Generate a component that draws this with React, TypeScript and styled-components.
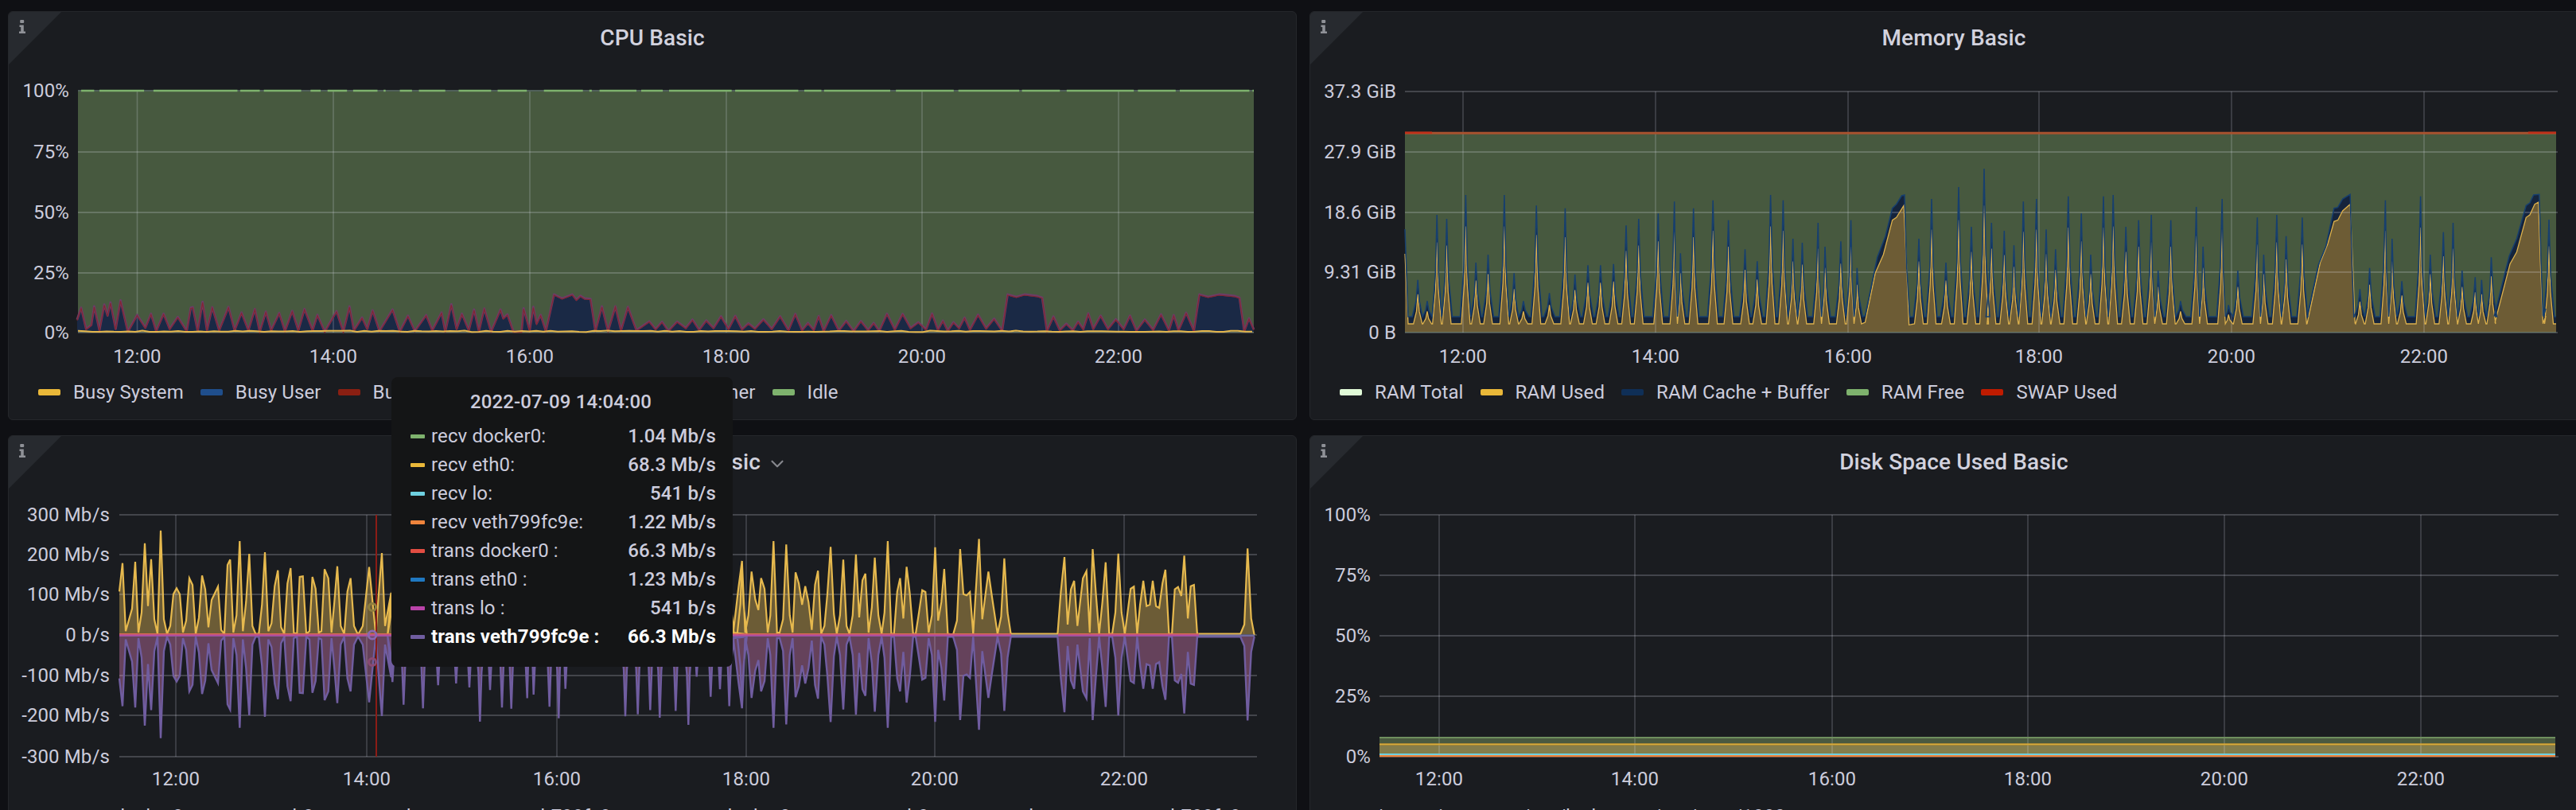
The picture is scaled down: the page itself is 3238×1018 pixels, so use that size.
import styled, { createGlobalStyle } from 'styled-components';
import { ChevronDown } from 'lucide-react';

type Pt = [number, number];

const GREEN = '#7EB26D';
const YELLOW = '#EAB839';
const GRID = 'rgba(235,235,250,0.2)';

const GlobalStyle = createGlobalStyle`
    html, body {
        margin: 0;
        background: #0f1014;
        overflow: hidden;
    }
    body {
        font-family: Roboto, "Liberation Sans", sans-serif;
        color: rgb(204, 204, 220);
        letter-spacing: 0.12px;
    }
`;

const Page = styled.div`
    position: relative;
    width: 3238px;
    height: 1018px;
    overflow: hidden;
    box-sizing: border-box;
    padding: 14px 0 0 10px;
    display: grid;
    grid-template-columns: 1620px 1620px;
    grid-auto-rows: 514px;
    gap: 19px 16px;
`;

const Panel = styled.section`
    position: relative;
    box-sizing: border-box;
    height: 514px;
    background: #1a1c20;
    border: 1px solid #25272b;
    border-radius: 6px;
    overflow: hidden;
    display: flex;
    flex-direction: column;
`;

const InfoCorner = styled.div`
    position: absolute;
    left: 0;
    top: 0;
    width: 66px;
    height: 66px;
    background: #272a2f;
    clip-path: polygon(0 0, 100% 0, 0 100%);
`;

const InfoGlyph = styled.svg`
    position: absolute;
    left: 13px;
    top: 10px;
    width: 8px;
    height: 17px;
    fill: #8f9197;
`;

const Header = styled.header`
    height: 65px;
    flex: none;
    display: flex;
    align-items: center;
    justify-content: center;
`;

const Title = styled.h2`
    position: relative;
    margin: 0;
    font-size: 28px;
    font-weight: 500;
    line-height: 36px;
    color: #d2d2de;

    svg {
        position: absolute;
        left: 100%;
        top: 7px;
        margin-left: 8px;
        color: #85868c;
    }
`;

const ChartSvg = styled.svg`
    display: block;
    flex: none;
    width: 1618px;
    height: 390px;
`;

const AxisLabel = styled.text`
    font-family: Roboto, "Liberation Sans", sans-serif;
    font-size: 24px;
    fill: rgb(204, 204, 220);
`;

const Legend = styled.ul`
    list-style: none;
    margin: 0;
    padding: 0 0 0 37px;
    height: 46px;
    flex: none;
    display: flex;
    align-items: center;
    gap: 21px;
    font-size: 24px;
`;

const LegendItem = styled.li`
    display: flex;
    align-items: center;
    gap: 16px;
    white-space: nowrap;
`;

const Swatch = styled.i<{ $color: string }>`
    display: block;
    width: 28px;
    height: 8px;
    border-radius: 2px;
    background: ${p => p.$color};
`;

const Tooltip = styled.div`
    position: absolute;
    left: 492px;
    top: 474px;
    width: 429px;
    height: 364px;
    box-sizing: border-box;
    padding: 13px 21px 0 24px;
    background: #141516;
    border-radius: 8px;
`;

const TooltipTitle = styled.div`
    height: 36px;
    line-height: 36px;
    margin-bottom: 7px;
    text-align: center;
    padding-right: 6px;
    font-size: 24px;
    font-weight: 500;
`;

const TooltipRow = styled.div<{ $active?: boolean }>`
    height: 36px;
    display: flex;
    align-items: center;
    font-size: 24px;
    color: ${p => (p.$active ? '#ffffff' : 'rgb(204, 204, 220)')};
    font-weight: ${p => (p.$active ? 700 : 400)};
`;

const TooltipSwatch = styled.i<{ $color: string }>`
    width: 18px;
    height: 5px;
    margin-right: 8px;
    border-radius: 1px;
    flex: none;
    background: ${p => p.$color};
`;

const TooltipValue = styled.span<{ $active?: boolean }>`
    margin-left: auto;
    font-weight: ${p => (p.$active ? 700 : 500)};
`;

// turns a list of traced points into svg strings
const toLine = (pts: Pt[]) => pts.map(([x, y]) => `${x.toFixed(1)},${y.toFixed(1)}`).join(' ');
const closed = (pts: Pt[], base: number) => {
    const first = pts[0][0];
    const last = pts[pts.length - 1][0];
    return `${first},${base} ${toLine(pts)} ${last},${base}`;
};

function seeded(seed: number) {
    let s = seed;
    return () => {
        s = (s * 16807) % 2147483647;
        return (s % 10000) / 10000;
    };
}

// peaks are concave, thin at the tip and wider at the foot
function spikes(peaks: Pt[], base: number, hw = 6): Pt[] {
    const out: Pt[] = [];
    peaks.forEach(([x, y], i) => {
        const prev = peaks[i - 1];
        const next = peaks[i + 1];
        const l = prev ? Math.max(x - hw, (prev[0] + x) / 2) : x - hw;
        const r = next ? Math.min(x + hw, (x + next[0]) / 2) : x + hw;
        const mid = base + (y - base) * 0.42;
        out.push([l, base], [x - (x - l) * 0.32, mid], [x, y], [x + (r - x) * 0.32, mid], [r, base]);
    });
    return out;
}

/* ---------- CPU ---------- */

const cpuTrace: Pt[] = [
    [190, 1205], [200, 1160], [212, 1240], [225, 1225], [232, 1155], [245, 1245], [257, 1148], [265, 1190], [272, 1140], [285, 1240], [297, 1132], [315, 1250],
    [338, 1187], [358, 1235], [372, 1183], [385, 1248], [403, 1183], [418, 1240], [438, 1195], [460, 1248], [470, 1160], [475, 1158], [487, 1248], [499, 1138],
    [510, 1245], [523, 1158], [540, 1245], [563, 1157], [578, 1245], [595, 1178], [612, 1245], [628, 1165], [640, 1250], [655, 1175], [668, 1245], [688, 1180],
    [702, 1248], [720, 1172], [735, 1245], [750, 1165], [770, 1245], [782, 1187], [800, 1250], [829, 1173], [846, 1250], [861, 1155], [872, 1245], [892, 1197],
    [905, 1240], [918, 1170], [935, 1248], [967, 1167], [985, 1250], [1005, 1190], [1022, 1248], [1050, 1188], [1065, 1245], [1088, 1178], [1097, 1250],
    [1112, 1147], [1125, 1240], [1138, 1183], [1155, 1245], [1168, 1167], [1180, 1248], [1193, 1163], [1210, 1250], [1233, 1167], [1240, 1200], [1250, 1185],
    [1265, 1250], [1285, 1250], [1290, 1162], [1305, 1245], [1314, 1157], [1322, 1220], [1332, 1187], [1345, 1248], [1365, 1110], [1385, 1125], [1410, 1110],
    [1420, 1130], [1430, 1115], [1440, 1125], [1455, 1127], [1467, 1248], [1483, 1155], [1498, 1248], [1516, 1155], [1530, 1245], [1547, 1157], [1568, 1245],
];

function buildCpu(): Pt[] {
    const pts: Pt[] = cpuTrace.map(([x, y]) => [x / 1.96, y / 3]);
    const r = seeded(77);
    const plateau = (a: number, b: number) => {
        pts.push([a, 416], [a + 7, 370], [a + 18, 373], [(a + b) / 2, 370], [b - 12, 372], [b - 6, 374], [b, 416]);
    };
    let x = 808;
    const run = (end: number) => {
        while (x < end) {
            const w = 6 + r() * 5;
            pts.push([x + w, 393 + r() * 14], [x + 2 * w, 412 + r() * 4]);
            x += 2 * w;
        }
    };
    run(1252);
    plateau(x, 1316);
    x = 1316;
    run(1500);
    plateau(x, 1564);
    x = 1564;
    pts.push([1570, 400], [1576, 414]);
    return pts;
}

// the idle line sits on 100% but drops out for a few pixels now and then
const idleTrace: Pt[] = ([
    [200, 232], [245, 355], [378, 585], [592, 640], [650, 742], [765, 790], [807, 855], [870, 930], [945, 950], [985, 1015], [1032, 1097], [1130, 1210], [1226, 1298], [1340, 1436], [1452, 1458], [1477, 1568],
] as Pt[]).map(([a, b]) => [a / 1.96, b / 1.96]);

function idleSegments(): Pt[] {
    const segs = [...idleTrace];
    const r = seeded(31);
    let x = 806;
    while (x < 1576) {
        const len = 20 + r() * 70;
        segs.push([x, Math.min(1576, x + len)]);
        x += len + 3 + r() * 6;
    }
    return segs;
}

function CpuChart() {
    const top = buildCpu();
    const r = seeded(9);
    const system: Pt[] = [];
    for (let x = 98; x <= 1576; x += 9) system.push([x, 415.6 + r() * 1.6]);
    return (
        <ChartSvg viewBox="11 80 1618 390">
            <rect x={98} y={115} width={1478} height={303} fill="#47593f" />
            <polygon points={closed(top, 417)} fill="#1a2945" />
            <Grid x0={98} x1={1576} top={114} ys={[191, 267, 343, 418]} xs={[172.5, 419, 666, 913, 1159, 1406]} />
            <polyline points={toLine(top)} fill="none" stroke="#6c3d66" strokeWidth={2.8} strokeLinejoin="round" />
            <polyline points={toLine(top.map(([x, y]) => [x, y + 1] as Pt))} fill="none" stroke="#84252f" strokeWidth={1.1} />
            <polyline points={toLine(system)} fill="none" stroke="#e4b64a" strokeWidth={2} />
            <line x1={98} x2={1576} y1={114} y2={114} stroke="#50605a" strokeWidth={2} />
            {idleSegments().map(([a, b]) => <line key={a} x1={a} x2={b} y1={114} y2={114} stroke={GREEN} strokeWidth={2.5} />)}
            <YLabels right={87} rows={[[114, '100%'], [191, '75%'], [267, '50%'], [343, '25%'], [418, '0%']]} />
            <XLabels y={455.5} xs={[172.5, 419, 666, 913, 1159, 1406]} />
        </ChartSvg>
    );
}

/* ---------- Memory ---------- */

const z3 = ([x, y]: Pt): Pt => [1620 + x / 1.96, y / 3];
const z4 = ([x, y]: Pt): Pt => [2500 + x / 2.125, 100 + y / 3];

const memPeaksA: Pt[] = ([
    [318, 1055], [341, 1135], [365, 810], [389, 825], [436, 735], [461, 990], [491, 960], [531, 735], [555, 1030], [578, 1135], [610, 775], [642, 1105],
    [681, 785], [705, 1035], [737, 1000], [768, 1000], [800, 995], [831, 850], [862, 825], [910, 805], [950, 760], [965, 955], [997, 785], [1045, 755],
    [1083, 830], [1124, 940], [1154, 985], [1187, 735], [1218, 755], [1242, 900], [1265, 915], [1304, 840], [1321, 930], [1360, 910], [1385, 830], [1400, 1010],
] as Pt[]).map(z3);
const memPeaksGap: Pt[] = [[2412, 300], [2428, 250], [2446, 330], [2462, 235], [2478, 285], [2494, 212]];
const memPeaksB: Pt[] = ([
    [7, 540], [41, 570], [67, 625], [92, 460], [127, 450], [153, 565], [178, 640], [212, 440], [247, 505], [272, 660], [306, 440], [332, 435], [366, 555],
    [400, 530], [434, 510], [452, 720], [486, 530], [512, 835], [554, 480], [572, 630], [623, 450], [640, 850], [665, 720], [717, 520], [734, 660], [769, 510], [794, 590], [837, 520],
] as Pt[]).map(z4);
const memPeaksC: Pt[] = ([
    [991, 790], [1017, 710], [1059, 455], [1077, 600], [1103, 760], [1153, 440], [1179, 660], [1214, 575], [1240, 540], [1264, 720], [1299, 745], [1316, 755], [1342, 670],
] as Pt[]).map(z4);

const cacheRamp1: Pt[] = ([[1420, 1190], [1450, 970], [1470, 890], [1487, 785], [1497, 770], [1510, 738], [1517, 735], [1522, 1000], [1530, 1195]] as Pt[]).map(z3);
const usedRamp1: Pt[] = ([[1420, 1215], [1445, 1030], [1465, 960], [1487, 830], [1497, 820], [1515, 775], [1522, 1000], [1528, 1225]] as Pt[]).map(z3);
const cacheRamp2: Pt[] = ([[850, 895], [880, 700], [900, 630], [922, 485], [932, 482], [945, 450], [965, 433], [970, 700], [975, 895]] as Pt[]).map(z4);
const usedRamp2: Pt[] = ([[850, 920], [885, 690], [905, 620], [922, 535], [932, 530], [945, 495], [965, 470], [972, 700], [978, 918]] as Pt[]).map(z4);
const cacheRamp3: Pt[] = ([[1350, 890], [1390, 665], [1410, 600], [1435, 475], [1445, 465], [1455, 435], [1470, 433], [1475, 690], [1480, 890]] as Pt[]).map(z4);
const usedRamp3: Pt[] = ([[1352, 915], [1392, 695], [1410, 650], [1435, 520], [1445, 510], [1458, 470], [1468, 462], [1473, 690], [1480, 920]] as Pt[]).map(z4);

function memSeries(base: number, scale: number, hw: number, ramps: Pt[][]): Pt[] {
    const s = (peaks: Pt[]) => spikes(peaks.map(([x, y]) => [x, base - (398 - y) * scale] as Pt), base, hw);
    return [
        [1766, base - 110 * scale] as Pt,
        [1770, base],
        ...s(memPeaksA),
        ...ramps[0],
        ...s(memPeaksGap),
        ...s(memPeaksB),
        ...ramps[1],
        ...s(memPeaksC),
        ...ramps[2],
        [3200, base - 10],
        ...s([[3204, 276]]),
        [3213, base],
    ];
}

function MemoryChart() {
    const cache = memSeries(398, 1, 7, [cacheRamp1, cacheRamp2, cacheRamp3]);
    const used = memSeries(407, 0.8, 5.5, [usedRamp1, usedRamp2, usedRamp3]);
    return (
        <ChartSvg viewBox="1647 80 1618 390">
            <rect x={1766} y={168} width={1447} height={250} fill="#47593f" />
            <polygon points={closed(cache, 417)} fill="#15243c" />
            <polygon points={closed(used, 417)} fill="#6d5c35" />
            <Grid x0={1766} x1={3215} top={115} ys={[115, 191, 267, 342, 418]} xs={[1839, 2081, 2323, 2563, 2805, 3047]} />
            <polyline points={toLine(used)} fill="none" stroke="#dcb04c" strokeWidth={1.3} />
            <polyline points={toLine(cache)} fill="none" stroke="#173f6e" strokeWidth={1.5} />
            <line x1={1766} x2={3213} y1={167.2} y2={167.2} stroke="#a8522f" strokeWidth={3} />
            <line x1={1766} x2={1800} y1={166.8} y2={166.8} stroke="#c0301a" strokeWidth={2.4} />
            <line x1={3178} x2={3213} y1={166.8} y2={166.8} stroke="#c0301a" strokeWidth={2.4} />
            <YLabels right={1755} rows={[[115, '37.3 GiB'], [191, '27.9 GiB'], [267, '18.6 GiB'], [342, '9.31 GiB'], [418, '0 B']]} />
            <XLabels y={455.5} xs={[1839, 2081, 2323, 2563, 2805, 3047]} />
        </ChartSvg>
    );
}

/* ---------- Network ---------- */

const netLeft: Pt[] = ([
    [450, 640], [462, 533], [474, 790], [498, 705], [510, 528], [522, 795], [534, 720], [546, 458], [558, 695], [570, 518], [582, 745], [594, 800], [606, 410],
    [618, 745], [630, 800], [642, 770], [654, 650], [666, 628], [678, 650], [690, 795], [702, 750], [714, 590], [726, 615], [738, 800], [750, 740], [762, 580],
    [774, 632], [786, 775], [798, 672], [822, 622], [834, 785], [846, 800], [858, 540], [868, 520], [880, 795], [892, 730], [904, 450], [916, 790], [928, 680],
    [940, 498], [952, 770], [964, 800], [976, 800], [988, 690], [999, 492], [1012, 790], [1024, 760], [1036, 620], [1048, 560], [1060, 775], [1072, 800],
    [1084, 610], [1096, 552], [1108, 795], [1120, 800], [1130, 585], [1142, 583], [1155, 800], [1167, 790], [1178, 585], [1190, 630], [1202, 795], [1212, 790],
    [1224, 556], [1238, 590], [1250, 795], [1260, 690], [1272, 545], [1285, 770], [1298, 800], [1310, 640], [1322, 590], [1335, 770], [1350, 803], [1368, 770],
    [1392, 548], [1417, 800], [1428, 650], [1440, 495], [1452, 770], [1475, 645],
] as Pt[]).map(([x, y]) => [x / 3, 530 + y / 3]);

// only the downward half shows below the tooltip, so the upward half is mirrored from it
const netHidden: Pt[] = spikes(([
    [40, 80], [82, 165], [155, 178], [212, 92], [280, 85], [330, 100], [370, 228], [408, 110], [453, 175], [488, 180], [548, 140], [572, 127], [632, 172],
    [667, 215], [692, 105], [918, 208], [965, 200], [1012, 185], [1048, 213], [1108, 188], [1156, 240], [1187, 60], [1240, 135], [1275, 107], [1310, 170], [1358, 175],
] as Pt[]).map(([x, y]) => [480 + x / 3, 797 - (830 + y / 3 - 800) * 1.03]), 797, 6);

const netZoomEleven: Pt[] = ([
    [65, 465], [85, 295], [98, 195], [110, 465], [122, 400], [134, 235], [148, 340], [160, 380], [170, 260], [183, 300], [195, 465], [205, 400], [217, 120],
    [230, 465], [240, 465], [253, 415], [265, 133], [278, 400], [289, 465],
] as Pt[]).map(([x, y]) => [900 + x / 3, 640 + y / 3]);

const netRight: Pt[] = ([
    [0, 568], [10, 610], [20, 690], [30, 620], [40, 680], [50, 785], [60, 615], [69, 562], [79, 800], [89, 770], [98, 650], [108, 472], [118, 725], [127, 800],
    [137, 730], [147, 520], [157, 770], [166, 800], [176, 730], [186, 500], [196, 738], [206, 598], [215, 573], [225, 795], [235, 700], [244, 512], [255, 730],
    [265, 800], [274, 720], [284, 450], [295, 800], [303, 800], [313, 640], [322, 590], [332, 742], [342, 547], [352, 650], [362, 800], [370, 800], [380, 720],
    [390, 635], [400, 642], [410, 795], [420, 730], [430, 473], [439, 750], [449, 680], [458, 555], [469, 800], [485, 803], [497, 750], [507, 480], [517, 650],
    [527, 655], [537, 642], [547, 800], [565, 442], [575, 745], [594, 565], [605, 660], [622, 800], [633, 735], [643, 515], [653, 720], [663, 800], [807, 800],
    [817, 640], [828, 510], [838, 765], [848, 632], [858, 600], [868, 770], [885, 590], [896, 563], [906, 795], [915, 480], [925, 650], [935, 800], [945, 680],
    [955, 530], [966, 800], [975, 800], [985, 720], [994, 497], [1004, 720], [1014, 800], [1032, 630], [1042, 622], [1052, 800], [1061, 690], [1071, 600],
    [1081, 695], [1091, 690], [1100, 600], [1110, 695], [1120, 702], [1130, 610], [1139, 558], [1150, 800], [1159, 800], [1168, 632], [1178, 623], [1188, 657],
    [1197, 505], [1208, 742], [1217, 620], [1227, 615], [1237, 800], [1370, 800], [1382, 765], [1392, 478], [1403, 742], [1413, 805],
] as Pt[]).map(([x, y]) => [1000 + x / 2.45, 530 + y / 3]);

const netUp: Pt[] = [...netLeft, ...netHidden, ...netZoomEleven, ...netRight];
const netDown: Pt[] = netUp.map(([x, y]) => [x, 800 + (y < 797 ? (797 - y) * 0.98 : 0)]);

function NetworkChart() {
    return (
        <ChartSvg viewBox="11 613 1618 390">
            <polygon points={closed(netUp, 797)} fill="#6c5c36" />
            <polygon points={closed(netDown, 800)} fill="#65425b" />
            <Grid x0={150} x1={1580} top={647} ys={[647, 697, 747, 798, 849, 899, 951]} xs={[221, 461, 700, 938, 1175, 1413]} />
            <polyline points={toLine(netDown)} fill="none" stroke="#705DA0" strokeWidth={2.4} />
            <polyline points={toLine(netUp)} fill="none" stroke="#e6b94e" strokeWidth={2.2} />
            <line x1={150} x2={1577} y1={798.8} y2={798.8} stroke="#6f6a9c" strokeWidth={2.4} />
            <line x1={150} x2={1271} y1={796.8} y2={796.8} stroke="#df6a52" strokeWidth={1.8} />
            <line x1={150} x2={1271} y1={798.6} y2={798.6} stroke="#b8489f" strokeWidth={2} />
            <line x1={1330} x2={1507} y1={796.8} y2={796.8} stroke="#df6a52" strokeWidth={1.8} />
            <line x1={1330} x2={1507} y1={798.6} y2={798.6} stroke="#b8489f" strokeWidth={2} />
            <line x1={473} x2={473} y1={647} y2={951} stroke="#8b1c16" strokeWidth={2} />
            <HoverDot cx={468} cy={763} r={4.5} stroke="#8f7f3f" />
            <HoverDot cx={468} cy={798} r={5} stroke="#8a68b0" />
            <HoverDot cx={468} cy={832} r={4.5} stroke="#8a4a73" />
            <YLabels right={138} rows={[[647, '300 Mb/s'], [697, '200 Mb/s'], [747, '100 Mb/s'], [798, '0 b/s'], [849, '-100 Mb/s'], [899, '-200 Mb/s'], [951, '-300 Mb/s']]} />
            <XLabels y={986.5} xs={[221, 461, 700, 938, 1175, 1413]} />
        </ChartSvg>
    );
}

/* ---------- Disk ---------- */

function DiskChart() {
    return (
        <ChartSvg viewBox="1647 613 1618 390">
            <rect x={1734} y={926} width={1478} height={8} fill="#4a5a40" />
            <rect x={1734} y={937} width={1478} height={10} fill="#847d4b" />
            <Grid x0={1734} x1={3216} top={647} ys={[647, 723, 799, 875, 951]} xs={[1809, 2055, 2303, 2549, 2796, 3043]} />
            <line x1={1734} x2={3212} y1={927} y2={927} stroke="#6f8f5e" strokeWidth={2.2} />
            <line x1={1734} x2={3212} y1={935.5} y2={935.5} stroke="#d8ad3c" strokeWidth={2.6} />
            <line x1={1734} x2={3212} y1={948} y2={948} stroke="#6ED0E0" strokeWidth={2.2} />
            <line x1={1734} x2={3212} y1={950.2} y2={950.2} stroke="#EF843C" strokeWidth={2.2} />
            <YLabels right={1723} rows={[[647, '100%'], [723, '75%'], [799, '50%'], [875, '25%'], [951, '0%']]} />
            <XLabels y={986.5} xs={[1809, 2055, 2303, 2549, 2796, 3043]} />
        </ChartSvg>
    );
}

/* ---------- shared bits ---------- */

const HoverDot = styled.circle`
    fill: none;
    stroke-width: 3;
`;

function Grid({ x0, x1, top, ys, xs }: { x0: number; x1: number; top: number; ys: number[]; xs: number[] }) {
    const bottom = ys[ys.length - 1];
    return (
        <g stroke={GRID}>
            {ys.map(y => <line key={y} x1={x0} x2={x1} y1={y} y2={y} strokeWidth={2} />)}
            {xs.map(x => <line key={x} x1={x} x2={x} y1={top} y2={bottom} strokeWidth={1.6} />)}
        </g>
    );
}

function YLabels({ right, rows }: { right: number; rows: [number, string][] }) {
    return (
        <>
            {rows.map(([y, label]) => (
                <AxisLabel key={label} x={right} y={y + 8} textAnchor="end">{label}</AxisLabel>
            ))}
        </>
    );
}

function XLabels({ y, xs }: { y: number; xs: number[] }) {
    const labels = ['12:00', '14:00', '16:00', '18:00', '20:00', '22:00'];
    return (
        <>
            {xs.map((x, i) => (
                <AxisLabel key={x} x={x} y={y} textAnchor="middle">{labels[i]}</AxisLabel>
            ))}
        </>
    );
}

function GrafanaPanel({ title, menu, legend, children }: { title: string; menu?: boolean; legend: [string, string][]; children: React.ReactNode }) {
    return (
        <Panel>
            <InfoCorner />
            <InfoGlyph viewBox="0 0 8 17">
                <rect x={1.2} y={0} width={5} height={4} rx={1} />
                <path d="M.5 6.5h5.3v8H8V17H0v-2.5h2.2V9H.5z" />
            </InfoGlyph>
            <Header>
                <Title>
                    {title}
                    {menu && <ChevronDown size={26} />}
                </Title>
            </Header>
            {children}
            <Legend>
                {legend.map(([name, color]) => (
                    <LegendItem key={name}>
                        <Swatch $color={color} />
                        {name}
                    </LegendItem>
                ))}
            </Legend>
        </Panel>
    );
}

const tooltipRows: [string, string, string][] = [
    ['recv docker0:', '1.04 Mb/s', GREEN],
    ['recv eth0:', '68.3 Mb/s', YELLOW],
    ['recv lo:', '541 b/s', '#6ED0E0'],
    ['recv veth799fc9e:', '1.22 Mb/s', '#EF843C'],
    ['trans docker0 :', '66.3 Mb/s', '#E24D42'],
    ['trans eth0 :', '1.23 Mb/s', '#1F78C1'],
    ['trans lo :', '541 b/s', '#BA43A9'],
    ['trans veth799fc9e :', '66.3 Mb/s', '#705DA0'],
];

export default function App() {
    return (
        <Page>
            <GlobalStyle />
            <GrafanaPanel
                title="CPU Basic"
                legend={[['Busy System', YELLOW], ['Busy User', '#1F4E8C'], ['Busy Iowait', '#8a1f12'], ['Busy IRQs', '#BF1B00'], ['Busy Other', '#6D1F62'], ['Idle', GREEN]]}
            >
                <CpuChart />
            </GrafanaPanel>
            <GrafanaPanel
                title="Memory Basic"
                legend={[['RAM Total', '#E0F9D7'], ['RAM Used', YELLOW], ['RAM Cache + Buffer', '#0f2f57'], ['RAM Free', GREEN], ['SWAP Used', '#BF1B00']]}
            >
                <MemoryChart />
            </GrafanaPanel>
            <GrafanaPanel
                title="Network Traffic Basic"
                menu
                legend={[['recv docker0', GREEN], ['recv eth0', YELLOW], ['recv lo', '#6ED0E0'], ['recv veth799fc9e', '#EF843C'], ['trans docker0', '#E24D42'], ['trans eth0', '#1F78C1'], ['trans lo', '#BA43A9'], ['trans veth799fc9e', '#705DA0']]}
            >
                <NetworkChart />
            </GrafanaPanel>
            <GrafanaPanel
                title="Disk Space Used Basic"
                legend={[['/', GREEN], ['/run', YELLOW], ['/run/lock', '#6ED0E0'], ['/run/user/1000', '#EF843C']]}
            >
                <DiskChart />
            </GrafanaPanel>
            <Tooltip>
                <TooltipTitle>2022-07-09 14:04:00</TooltipTitle>
                {tooltipRows.map(([name, value, color], i) => {
                    const active = i === tooltipRows.length - 1;
                    return (
                        <TooltipRow key={name} $active={active}>
                            <TooltipSwatch $color={color} />
                            {name}
                            <TooltipValue $active={active}>{value}</TooltipValue>
                        </TooltipRow>
                    );
                })}
            </Tooltip>
        </Page>
    );
}
